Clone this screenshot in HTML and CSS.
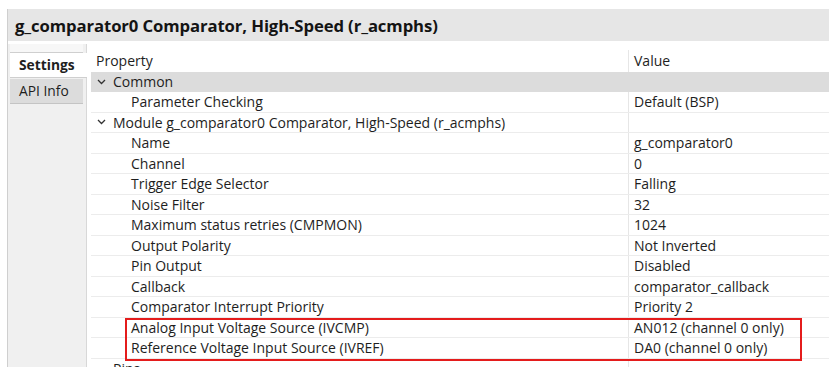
FILE: index.html
```html
<!DOCTYPE html>
<html>
<head>
<meta charset="utf-8">
<link rel="stylesheet" href="styles.css">
</head>
<body>
<div class="frame">
  <div class="title">g_comparator0 Comparator, High-Speed (r_acmphs)</div>
  <div class="main">
    <div class="tabs">
      <div class="tab-top"></div>
      <div class="tab active">Settings</div>
      <div class="tab">API Info</div>
    </div>
    <div class="table">
      <div class="row head"><div class="c1">Property</div><div class="c2">Value</div></div>
      <div class="row group"><div class="c1"><svg class="chev" width="9" height="6" viewBox="0 0 9 6"><polyline points="1,1 4.5,4.5 8,1" fill="none" stroke="#333" stroke-width="1.3"/></svg>Common</div><div class="c2"></div></div>
      <div class="row"><div class="c1 ind">Parameter Checking</div><div class="c2">Default (BSP)</div></div>
      <div class="row"><div class="c1"><svg class="chev" width="9" height="6" viewBox="0 0 9 6"><polyline points="1,1 4.5,4.5 8,1" fill="none" stroke="#333" stroke-width="1.3"/></svg>Module g_comparator0 Comparator, High-Speed (r_acmphs)</div><div class="c2"></div></div>
      <div class="row"><div class="c1 ind">Name</div><div class="c2">g_comparator0</div></div>
      <div class="row"><div class="c1 ind">Channel</div><div class="c2">0</div></div>
      <div class="row"><div class="c1 ind">Trigger Edge Selector</div><div class="c2">Falling</div></div>
      <div class="row"><div class="c1 ind">Noise Filter</div><div class="c2">32</div></div>
      <div class="row"><div class="c1 ind">Maximum status retries (CMPMON)</div><div class="c2">1024</div></div>
      <div class="row"><div class="c1 ind">Output Polarity</div><div class="c2">Not Inverted</div></div>
      <div class="row"><div class="c1 ind">Pin Output</div><div class="c2">Disabled</div></div>
      <div class="row"><div class="c1 ind">Callback</div><div class="c2">comparator_callback</div></div>
      <div class="row"><div class="c1 ind">Comparator Interrupt Priority</div><div class="c2">Priority 2</div></div>
      <div class="hl-group">
        <div class="row"><div class="c1 ind">Analog Input Voltage Source (IVCMP)</div><div class="c2">AN012 (channel 0 only)</div></div>
        <div class="row"><div class="c1 ind">Reference Voltage Input Source (IVREF)</div><div class="c2">DA0 (channel 0 only)</div></div>
        <div class="hl-box"></div>
      </div>
      <div class="row"><div class="c1 sub">Pins</div><div class="c2"></div></div>
    </div>
  </div>
</div>
</body>
</html>
```

FILE: styles.css
```css
html, body {
  margin: 0;
  padding: 0;
  background: #ffffff;
}
body {
  width: 834px;
  height: 375px;
  overflow: hidden;
  font-family: "Open Sans", "Noto Sans", sans-serif;
  color: #1e1e1e;
}
.frame {
  margin: 9px 0 0 7px;
  width: 821px;
  height: 358px;
  border-left: 1px solid #cfcfcf;
  overflow: hidden;
}
.title {
  height: 32px;
  line-height: 33px;
  background: #e6e6e6;
  padding-left: 7px;
  font-size: 16.7px;
  font-weight: 700;
  color: #141414;
  letter-spacing: -0.1px;
}
.main {
  display: flex;
  margin-top: 3px;
  height: 323px;
}
.tabs {
  width: 78px;
  background: #f0f0f0;
  border-right: 1px solid #d8d8d8;
  display: flex;
  flex-direction: column;
}
.tab-top {
  height: 8px;
  margin: 0 3px 0 2px;
  border-bottom: 1px solid #cfcfcf;
  background: #f7f7f7;
}
.tab {
  height: 24px;
  line-height: 23px;
  font-size: 13.8px;
  padding-left: 9px;
  margin: 1px 3px 0 2px;
  background: #dcdcdc;
  border-bottom: 1px solid #c4c4c4;
  color: #1e1e1e;
}
.tab.active {
  background: #ffffff;
  font-weight: 700;
  margin-right: -1px;
  margin-top: 0;
  border-bottom: 1px solid #cfcfcf;
  position: relative;
}
.table {
  flex: 1;
  margin-left: 4px;
  padding-top: 6px;
}
.row {
  display: flex;
  height: 20.5px;
  box-sizing: border-box;
  border-bottom: 1px solid #ececec;
  font-size: 14px;
  line-height: 19px;
}
.row.head {
  height: 21.5px;
  border-bottom: none;
  line-height: 21px;
}
.row.group {
  background: #dcdcdc;
  border-bottom: none;
}
.c1 {
  box-sizing: border-box;
  width: 537px;
  padding-left: 5px;
  white-space: nowrap;
  display: flex;
  align-items: center;
}
.c2 {
  flex: 1;
  box-sizing: border-box;
  border-left: 1px solid #e6e6e6;
  padding-left: 5px;
  white-space: nowrap;
}
.row.group .c2 {
  border-left-color: #dcdcdc;
}
.ind {
  padding-left: 40px;
}
.sub {
  padding-left: 22px;
}
.chev {
  margin: 0 7px 0 1px;
}
.hl-group {
  position: relative;
}
.hl-box {
  position: absolute;
  left: 34px;
  right: 27px;
  top: 0;
  bottom: -2px;
  border: 2px solid #e41c1c;
  pointer-events: none;
}
```
